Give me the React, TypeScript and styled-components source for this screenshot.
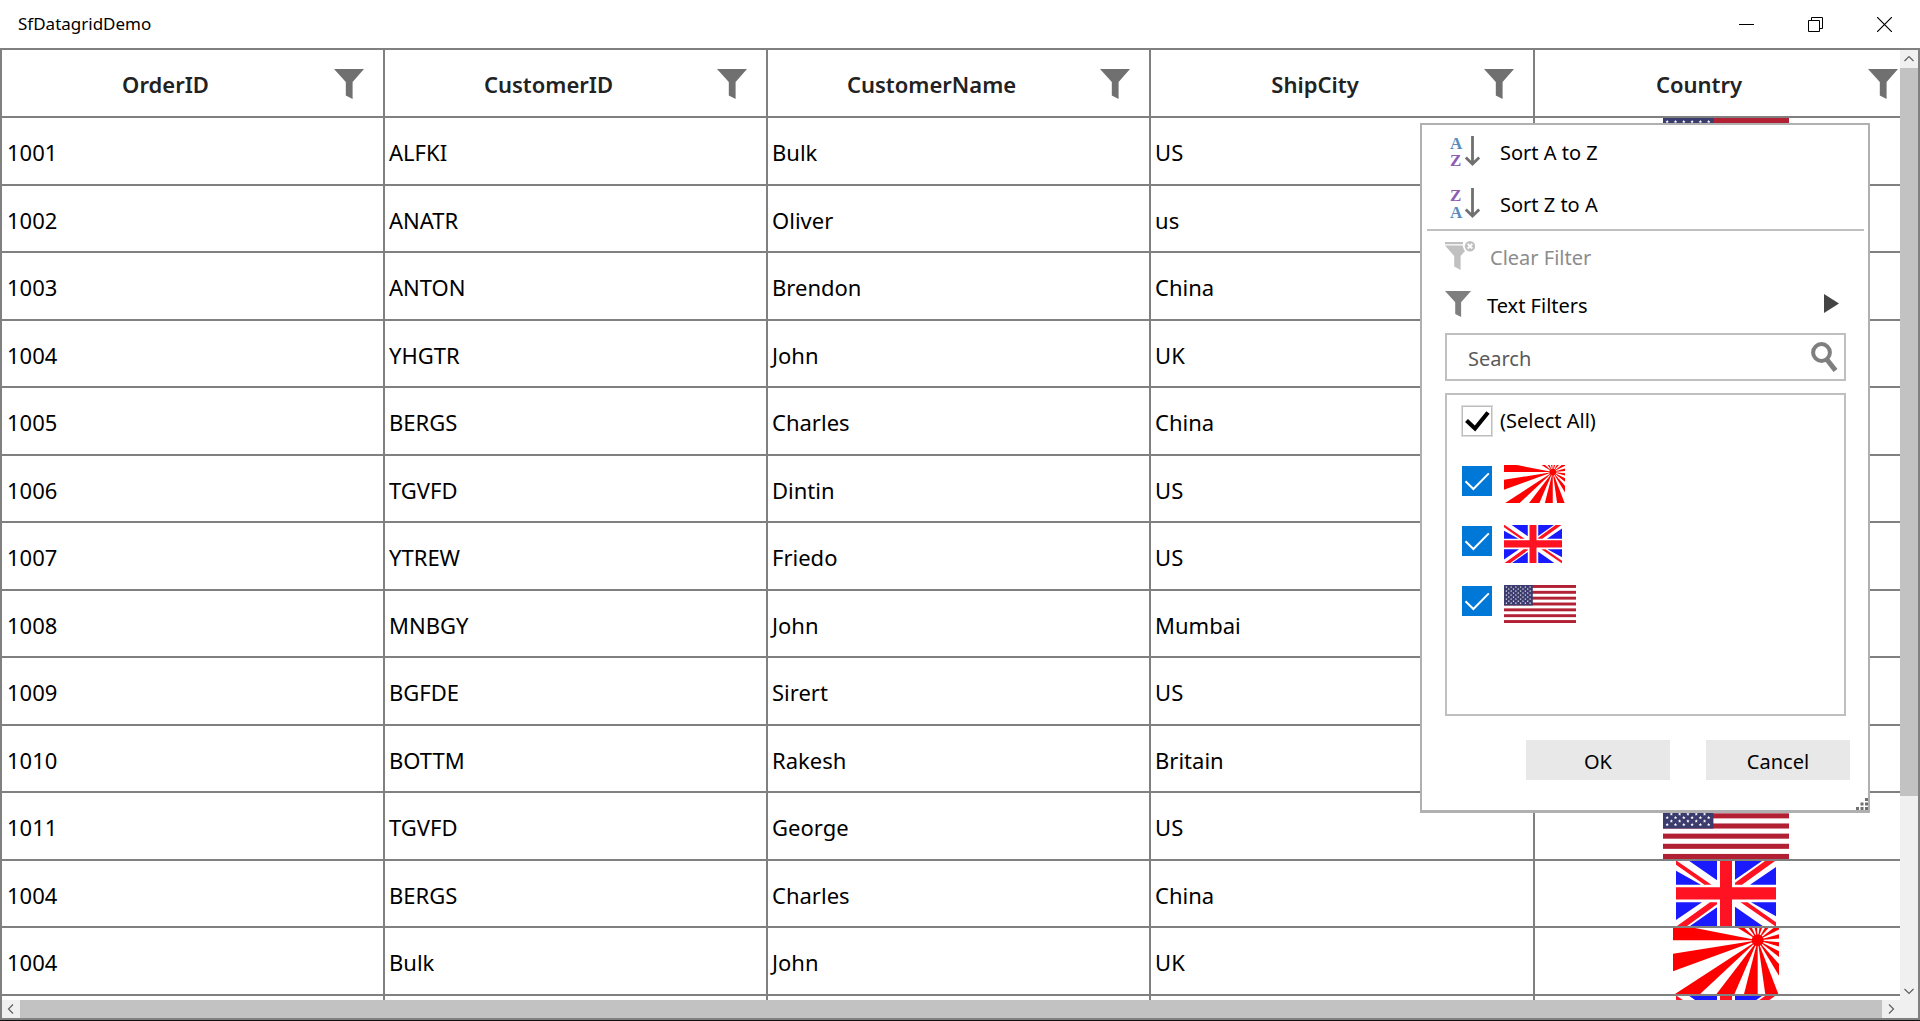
import React from 'react';
import styled, { createGlobalStyle } from 'styled-components';

const GlobalStyle = createGlobalStyle`
  *, *::before, *::after { box-sizing: border-box; }
  body {
    margin: 0;
    background: #ffffff;
    color: #000000;
    font-family: 'Segoe UI', 'Noto Sans', 'Open Sans', sans-serif;
    overflow: hidden;
  }
  button, input {
    margin: 0;
    padding: 0;
    border: 0;
    background: none;
    color: inherit;
    font: inherit;
  }
  svg { display: block; }
`;

const Window = styled.div`
  position: relative;
  display: flex;
  flex-direction: column;
  height: 100vh;
  border-bottom: 1px solid #101010;
`;

const TitleBar = styled.header`
  display: flex;
  align-items: center;
  justify-content: space-between;
  flex: none;
  height: 48px;
  padding-left: 18px;
`;

const AppTitle = styled.h1`
  margin: 0;
  font-size: 17px;
  font-weight: 400;
  line-height: 24px;
`;

const Captions = styled.div`
  display: flex;
  height: 100%;
  padding-right: 1px;
`;

const CaptionButton = styled.button`
  display: grid;
  place-items: center;
  width: 69px;
`;

const GridFrame = styled.main`
  display: grid;
  grid-template-columns: minmax(0, 1fr) 18px;
  grid-template-rows: minmax(0, 1fr) 18px;
  flex: 1;
  min-height: 0;
  border: 2px solid #808080;
  background: #f0f0f0;
`;

const Viewport = styled.div`
  overflow: hidden;
  background: #ffffff;
`;

const Table = styled.table`
  width: calc(100% + 19px);
  table-layout: fixed;
  border-collapse: separate;
  border-spacing: 0;
  font-size: 22px;
  line-height: 30px;
`;

const Column = styled.col<{ $width: string }>`
  width: ${(p) => p.$width};
`;

const HeadCell = styled.th`
  height: 68px;
  padding: 2px 19px 0 0;
  border: solid #808080;
  border-width: 0 2px 2px 0;
  font-weight: 600;
  color: #222222;
`;

const HeadContent = styled.div`
  display: flex;
  align-items: center;
`;

const HeadLabel = styled.span`
  flex: 1;
  text-align: center;
`;

const FilterButton = styled.button`
  flex: none;
  margin-left: 5px;
`;

const Row = styled.tr`
  height: 68px;
  &:nth-child(even) { height: 67px; }
`;

const Cell = styled.td`
  padding: 2px 4px 0;
  border: solid #808080;
  border-width: 0 2px 2px 0;
  white-space: nowrap;
  &:first-child { padding-left: 5px; }
`;

const FlagCell = styled(Cell)`
  padding: 0;
`;

const FlagFrame = styled.div`
  display: flex;
  justify-content: center;
  height: 66px;
  ${Row}:nth-child(even) & { height: 65px; }
`;

const ScrollBar = styled.div<{ $vertical?: boolean }>`
  display: flex;
  flex-direction: ${(p) => (p.$vertical ? 'column' : 'row')};
  background: #f0f0f0;
`;

const ScrollButton = styled.button`
  display: grid;
  place-items: center;
  flex: none;
  width: 18px;
  height: 18px;
`;

const ScrollTrack = styled.div`
  flex: 1;
`;

const ScrollThumb = styled.div<{ $vertical?: boolean }>`
  width: ${(p) => (p.$vertical ? '18px' : '100%')};
  height: ${(p) => (p.$vertical ? '79.6%' : '18px')};
  background: #c2c2c2;
`;

const Popup = styled.section`
  position: absolute;
  top: 123px;
  right: 50px;
  width: 450px;
  border: 2px solid #b0b0b0;
  border-bottom-width: 3px;
  background: #ffffff;
  font-size: 20px;
  line-height: 28px;
`;

const MenuItem = styled.button<{ $height: number; $indent: number; $gap: number }>`
  display: flex;
  align-items: center;
  gap: ${(p) => p.$gap}px;
  width: 100%;
  height: ${(p) => p.$height}px;
  padding: 0 29px 0 ${(p) => p.$indent}px;
  text-align: left;
  &:disabled { color: #8c8c8c; }
`;

const MenuText = styled.span`
  flex: 1;
  padding-top: 3px;
`;

const Separator = styled.hr`
  height: 2px;
  margin: 0 4px 0 5px;
  border: 0;
  background: #c0c0c0;
`;

const PopupBody = styled.div`
  display: flex;
  flex-direction: column;
  gap: 12px;
  padding: 6px 22px 0 23px;
`;

const SearchBox = styled.div`
  display: flex;
  align-items: center;
  height: 48px;
  padding: 0 5px 0 21px;
  border: 2px solid #bfbfbf;
`;

const SearchInput = styled.input`
  flex: 1;
  min-width: 0;
  padding-top: 4px;
  outline: none;
  &::placeholder { color: #5a5a5a; opacity: 1; }
`;

const ValueList = styled.ul`
  display: flex;
  flex-direction: column;
  gap: 22px;
  height: 323px;
  margin: 0;
  padding: 10px 15px;
  border: 2px solid #bfbfbf;
  list-style: none;
`;

const ValueLabel = styled.label<{ $gap: number }>`
  display: flex;
  align-items: flex-start;
  gap: ${(p) => p.$gap}px;
  height: 38px;
`;

const ValueText = styled.span`
  padding-top: 2px;
`;

const CheckFrame = styled.span`
  display: grid;
  flex: none;
  width: 30px;
  height: 30px;
  margin-top: 1px;
  & > * { grid-area: 1 / 1; }
  & > svg { pointer-events: none; }
`;

const CheckInput = styled.input<{ $plain?: boolean }>`
  appearance: none;
  width: 30px;
  height: 30px;
  border: ${(p) => (p.$plain ? '1px solid #bdbdbd' : '0')};
  box-shadow: ${(p) => (p.$plain ? '0 0 0 1px #dedede' : 'none')};
  background: ${(p) => (p.$plain ? '#ffffff' : '#0078d7')};
`;

const Actions = styled.div`
  display: flex;
  justify-content: flex-end;
  gap: 36px;
  padding: 24px 18px 30px;
`;

const ActionButton = styled.button`
  width: 144px;
  height: 40px;
  padding-top: 3px;
  background: #e8e8e8;
`;

const Grip = styled.svg`
  position: absolute;
  right: 0;
  bottom: 0;
`;

type FlagCode = 'us' | 'uk' | 'jp';

const US_STARS = Array.from({ length: 9 }, (_, r) =>
  Array.from({ length: r % 2 ? 5 : 6 }, (_, c) => ({
    x: 4.2 + c * 8.3 + (r % 2 ? 4.15 : 0),
    y: 3.6 + r * 3.5,
  })),
).flat();

const starPoints = (cx: number, cy: number) =>
  Array.from({ length: 10 }, (_, i) => {
    const a = -Math.PI / 2 + (i * Math.PI) / 5;
    const r = i % 2 ? 0.8 : 1.8;
    return `${cx + r * Math.cos(a)},${cy + r * Math.sin(a)}`;
  }).join(' ');

const UsFlag = () => (
  <>
    <rect width="126" height="66" fill="#ffffff" />
    {[0, 1, 2, 3, 4, 5, 6].map((i) => (
      <rect key={i} y={(i * 2 * 66) / 13} width="126" height={66 / 13} fill="#b22034" />
    ))}
    <rect width="50.4" height={(66 * 7) / 13} fill="#3c3b6e" />
    {US_STARS.map((s) => (
      <polygon key={`${s.x}-${s.y}`} points={starPoints(s.x, s.y)} fill="#ffffff" />
    ))}
  </>
);

const UkHalf = () => (
  <>
    <path d="M13.3 0H41V19.5Z M0 10V24H25Z M86 0H59V19Z M100 6V24H74Z" fill="#1a1aff" />
    <path d="M0 0H1L35.5 24H28.5L0 3.7Z M89 0H99L66 24H59V22Z" fill="#ff1222" />
  </>
);

const UkFlag = () => (
  <>
    <rect width="100" height="66" fill="#ffffff" />
    <UkHalf />
    <g transform="rotate(180 50 33)">
      <UkHalf />
    </g>
    <path d="M44 0H56V66H44Z M0 26.7H100V39.2H0Z" fill="#ff1222" />
  </>
);

/* Start and end angle of each ray, in degrees, clockwise from the right. */
const SUN_RAYS = [
  [180, 191.1], [160, 171], [137, 147], [113.4, 127.5], [90, 104.3], [69, 82],
  [48, 59], [27, 38], [5, 16], [-16, -5], [-38, -27], [-60, -49], [-82, -71],
  [-104, -93], [-126, -115], [-148, -137],
];

const JpFlag = () => (
  <>
    <rect width="106" height="66" fill="#ffffff" />
    {SUN_RAYS.map(([from, to]) => {
      const at = (deg: number) => {
        const a = (deg * Math.PI) / 180;
        return `${84.7 + 140 * Math.cos(a)},${12.3 + 140 * Math.sin(a)}`;
      };
      return <polygon key={from} points={`84.7,12.3 ${at(from)} ${at(to)}`} fill="#ff0000" />;
    })}
    <circle cx="84.7" cy="12.3" r="6" fill="#ff0000" />
  </>
);

const FLAGS: Record<FlagCode, { width: number; small: number; art: React.ReactNode }> = {
  us: { width: 126, small: 72, art: <UsFlag /> },
  uk: { width: 100, small: 58, art: <UkFlag /> },
  jp: { width: 106, small: 61, art: <JpFlag /> },
};

const Flag = ({ code, small }: { code: FlagCode; small?: boolean }) => {
  const flag = FLAGS[code];
  return (
    <svg
      width={small ? flag.small : flag.width}
      height={small ? 38 : '100%'}
      viewBox={`0 0 ${flag.width} 66`}
      preserveAspectRatio="none"
      aria-hidden="true"
    >
      {flag.art}
    </svg>
  );
};

const Funnel = ({ size, color }: { size: number; color: string }) => (
  <svg width={size} height={size} viewBox="0 0 30 30" aria-hidden="true">
    <path d="M0 0H30L18.6 13V30L11.8 26.4V13Z" fill={color} />
  </svg>
);

const ClearFunnel = () => (
  <svg width="30" height="30" viewBox="0 0 30 30" aria-hidden="true">
    <path d="M0 1H18V3.2H0Z M0 4.6H17.6Q18.4 8.6 20 10L15.6 15V29L9.2 25.6V15Z" fill="#c0c0c0" />
    <circle cx="25" cy="5.2" r="5.2" fill="#c0c0c0" />
    <path d="M22.7 2.9L27.3 7.5M27.3 2.9L22.7 7.5" stroke="#ffffff" strokeWidth="1.8" />
  </svg>
);

const SortDrawing = styled.svg`
  overflow: visible;
`;

const Letter = styled.text`
  font-family: 'Liberation Serif', 'Times New Roman', serif;
  font-size: 17px;
  font-weight: 700;
`;

const SortIcon = ({ descending }: { descending?: boolean }) => (
  <SortDrawing width="30" height="30" viewBox="0 0 30 30" aria-hidden="true">
    <Letter x="0" y={descending ? 30 : 13} fill="#5a8cbe">A</Letter>
    <Letter x="0" y={descending ? 13 : 30} fill="#8e5bb5">Z</Letter>
    <path d="M22.5 0V28M15.8 21.4L22.5 28L29.2 21.4" fill="none" stroke="#707070" strokeWidth="2.8" />
  </SortDrawing>
);

const Chevron = ({ d }: { d: string }) => (
  <svg width="12" height="12" viewBox="0 0 12 12" aria-hidden="true">
    <path d={d} fill="none" stroke="#606060" strokeWidth="1.2" />
  </svg>
);

const COLUMNS = [
  { name: 'OrderID', width: '19.98%' },
  { name: 'CustomerID', width: '19.98%' },
  { name: 'CustomerName', width: '19.98%' },
  { name: 'ShipCity', width: 'auto' },
  { name: 'Country', width: 'auto' },
];

const ROWS: { cells: string[]; flag: FlagCode }[] = [
  { cells: ['1001', 'ALFKI', 'Bulk', 'US'], flag: 'us' },
  { cells: ['1002', 'ANATR', 'Oliver', 'us'], flag: 'us' },
  { cells: ['1003', 'ANTON', 'Brendon', 'China'], flag: 'jp' },
  { cells: ['1004', 'YHGTR', 'John', 'UK'], flag: 'uk' },
  { cells: ['1005', 'BERGS', 'Charles', 'China'], flag: 'jp' },
  { cells: ['1006', 'TGVFD', 'Dintin', 'US'], flag: 'us' },
  { cells: ['1007', 'YTREW', 'Friedo', 'US'], flag: 'us' },
  { cells: ['1008', 'MNBGY', 'John', 'Mumbai'], flag: 'jp' },
  { cells: ['1009', 'BGFDE', 'Sirert', 'US'], flag: 'us' },
  { cells: ['1010', 'BOTTM', 'Rakesh', 'Britain'], flag: 'uk' },
  { cells: ['1011', 'TGVFD', 'George', 'US'], flag: 'us' },
  { cells: ['1004', 'BERGS', 'Charles', 'China'], flag: 'uk' },
  { cells: ['1004', 'Bulk', 'John', 'UK'], flag: 'jp' },
  { cells: ['', '', '', ''], flag: 'uk' },
];

const FLAG_VALUES: FlagCode[] = ['jp', 'uk', 'us'];

const FilterPopup = () => (
  <Popup>
    <MenuItem type="button" $height={52} $indent={28} $gap={20}>
      <SortIcon />
      <MenuText>Sort A to Z</MenuText>
    </MenuItem>
    <MenuItem type="button" $height={52} $indent={28} $gap={20}>
      <SortIcon descending />
      <MenuText>Sort Z to A</MenuText>
    </MenuItem>
    <Separator />
    <MenuItem type="button" disabled $height={50} $indent={23} $gap={15}>
      <ClearFunnel />
      <MenuText>Clear Filter</MenuText>
    </MenuItem>
    <MenuItem type="button" $height={46} $indent={23} $gap={16}>
      <Funnel size={26} color="#7f7f7f" />
      <MenuText>Text Filters</MenuText>
      <svg width="15" height="20" viewBox="0 0 15 20" aria-hidden="true">
        <path d="M0 0L15 9.5L0 19Z" fill="#444444" />
      </svg>
    </MenuItem>
    <PopupBody>
      <SearchBox>
        <SearchInput type="text" placeholder="Search" aria-label="Search" />
        <button type="button" aria-label="Search">
          <svg width="28" height="32" viewBox="0 0 28 32" aria-hidden="true">
            <circle cx="10.5" cy="11.5" r="8.4" fill="none" stroke="#7f7f7f" strokeWidth="4" />
            <path d="M15.5 18L24.5 29.5" stroke="#7f7f7f" strokeWidth="5" />
          </svg>
        </button>
      </SearchBox>
      <ValueList>
        <li>
          <ValueLabel $gap={8}>
            <CheckFrame>
              <CheckInput type="checkbox" defaultChecked $plain />
              <svg width="30" height="30" viewBox="0 0 30 30" aria-hidden="true">
                <path d="M4.5 14.5L13 22.5L26 6.5" fill="none" stroke="#000000" strokeWidth="4.2" />
              </svg>
            </CheckFrame>
            <ValueText>(Select All)</ValueText>
          </ValueLabel>
        </li>
        {FLAG_VALUES.map((code) => (
          <li key={code}>
            <ValueLabel $gap={12}>
              <CheckFrame>
                <CheckInput type="checkbox" defaultChecked aria-label={code.toUpperCase()} />
                <svg width="30" height="30" viewBox="0 0 30 30" aria-hidden="true">
                  <path d="M3.5 15.2L11.4 23L26.8 7.4" fill="none" stroke="#ffffff" strokeWidth="2" />
                </svg>
              </CheckFrame>
              <Flag code={code} small />
            </ValueLabel>
          </li>
        ))}
      </ValueList>
    </PopupBody>
    <Actions>
      <ActionButton type="button">OK</ActionButton>
      <ActionButton type="button">Cancel</ActionButton>
    </Actions>
    <Grip width="12" height="12" viewBox="0 0 12 12" aria-hidden="true">
      <path
        d="M9 0h3v3h-3z M4.5 4.5h3v3h-3z M9 4.5h3v3h-3z M0 9h3v3h-3z M4.5 9h3v3h-3z M9 9h3v3h-3z"
        fill="#707070"
      />
    </Grip>
  </Popup>
);

export default function App() {
  return (
    <>
      <GlobalStyle />
      <Window>
        <TitleBar>
          <AppTitle>SfDatagridDemo</AppTitle>
          <Captions>
            <CaptionButton type="button" aria-label="Minimize">
              <svg width="15" height="15" viewBox="0 0 15 15" aria-hidden="true">
                <path d="M0 7.5H15" stroke="#000000" />
              </svg>
            </CaptionButton>
            <CaptionButton type="button" aria-label="Restore">
              <svg width="15" height="15" viewBox="0 0 15 15" aria-hidden="true">
                <path d="M.5 3.5H11.5V14.5H.5Z M3.5 3.5V.5H14.5V11.5H11.5" fill="none" stroke="#000000" />
              </svg>
            </CaptionButton>
            <CaptionButton type="button" aria-label="Close">
              <svg width="15" height="15" viewBox="0 0 15 15" aria-hidden="true">
                <path d="M0 0L15 15M15 0L0 15" stroke="#000000" strokeWidth="1.2" />
              </svg>
            </CaptionButton>
          </Captions>
        </TitleBar>
        <GridFrame>
          <Viewport>
            <Table>
              <colgroup>
                {COLUMNS.map((column) => (
                  <Column key={column.name} $width={column.width} />
                ))}
              </colgroup>
              <thead>
                <tr>
                  {COLUMNS.map(({ name }) => (
                    <HeadCell key={name} scope="col">
                      <HeadContent>
                        <HeadLabel>{name}</HeadLabel>
                        <FilterButton type="button" aria-label={`Filter ${name}`}>
                          <Funnel size={30} color="#707070" />
                        </FilterButton>
                      </HeadContent>
                    </HeadCell>
                  ))}
                </tr>
              </thead>
              <tbody>
                {ROWS.map((row, r) => (
                  <Row key={r}>
                    {row.cells.map((text, c) => (
                      <Cell key={c}>{text}</Cell>
                    ))}
                    <FlagCell>
                      <FlagFrame>
                        <Flag code={row.flag} />
                      </FlagFrame>
                    </FlagCell>
                  </Row>
                ))}
              </tbody>
            </Table>
          </Viewport>
          <ScrollBar $vertical>
            <ScrollButton type="button" aria-label="Scroll up">
              <Chevron d="M1.5 8L6 3.5L10.5 8" />
            </ScrollButton>
            <ScrollTrack>
              <ScrollThumb $vertical />
            </ScrollTrack>
            <ScrollButton type="button" aria-label="Scroll down">
              <Chevron d="M1.5 4L6 8.5L10.5 4" />
            </ScrollButton>
          </ScrollBar>
          <ScrollBar>
            <ScrollButton type="button" aria-label="Scroll left">
              <Chevron d="M8 1.5L3.5 6L8 10.5" />
            </ScrollButton>
            <ScrollTrack>
              <ScrollThumb />
            </ScrollTrack>
            <ScrollButton type="button" aria-label="Scroll right">
              <Chevron d="M4 1.5L8.5 6L4 10.5" />
            </ScrollButton>
          </ScrollBar>
        </GridFrame>
        <FilterPopup />
      </Window>
    </>
  );
}
